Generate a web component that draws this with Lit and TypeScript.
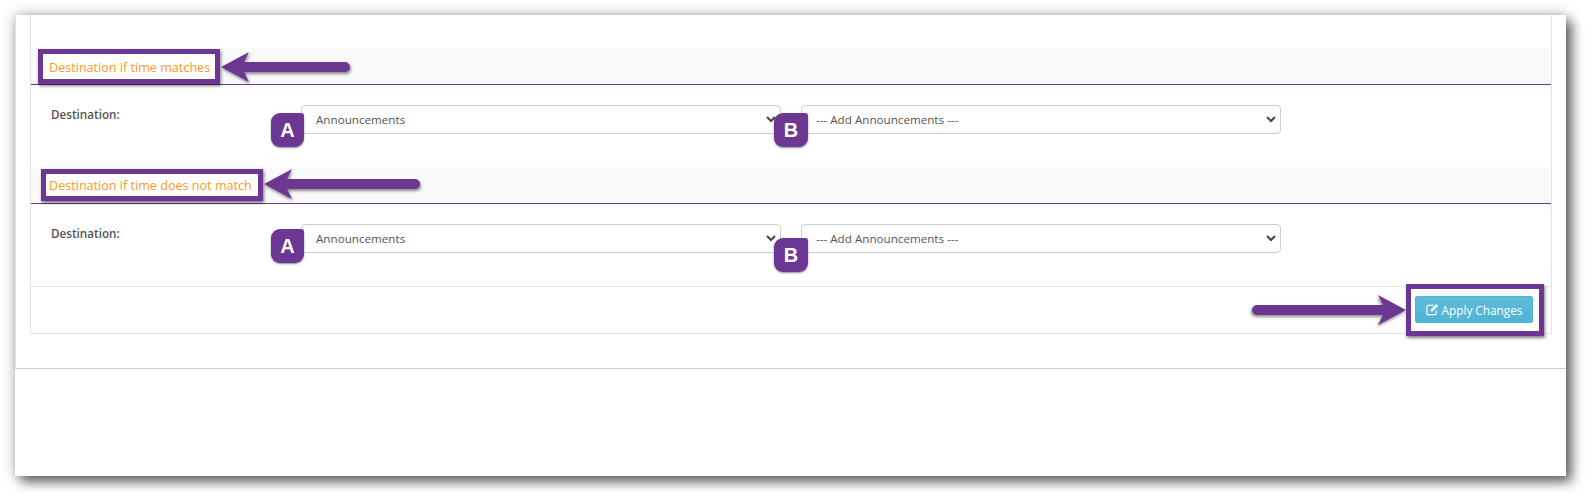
import { LitElement, html, css, svg } from "lit";
import { customElement } from "lit/decorators.js";

const PURPLE = "#6c3792";

@customElement("app-root")
export class AppRoot extends LitElement {
  static styles = css`
    :host { display: block; position: relative; width: 1592px; height: 501px; background: #fff; overflow: hidden;
      font-family: "Open Sans", sans-serif; font-size: 12px; color: #555; }
    .window { position: absolute; left: 15px; top: 15px; width: 1551px; height: 461px; background: #fff;
      box-shadow: 6px 6px 11px rgba(0,0,0,.55), 0 0 13px rgba(0,0,0,.28); }
    .panel { height: 354px; box-sizing: border-box; padding: 0 14px 0 15px; border-left: 1px solid #e2e2e2; border-bottom: 1px solid #ccc; }
    .card { height: 319px; box-sizing: border-box; border: 1px solid #e3e3e3; border-top: 0; margin-left: -1px; padding-top: 33px; }
    .head { height: 37px; box-sizing: border-box; background: #f9f9f9; border-bottom: 1px solid #6c3792; display: flex; align-items: flex-start; }
    .title { box-sizing: border-box; background: #fff; border: 5px solid #6c3792; color: #f99a25; font-size: 12.6px; line-height: 16px;
      box-shadow: 1px 2px 3px rgba(0,0,0,.5); white-space: nowrap; }
    .t1 { width: 182px; height: 35px; margin: 1px 0 0 7px; padding: 6px 0 0 6px; }
    .t2 { width: 222px; height: 32px; margin: 2px 0 0 10px; padding: 4px 0 0 3px; }
    .row { display: flex; height: 82px; box-sizing: border-box; padding: 20px 0 0 20px; }
    .label { width: 250px; font-weight: 600; font-size: 11.7px; line-height: 19px; color: #555; }
    .selects { display: flex; gap: 20px; }
    .sel { position: relative; width: 480px; height: 29px; }
    select { appearance: none; width: 100%; height: 100%; box-sizing: border-box; border: 1px solid #ccc; border-radius: 4px; background: #fff;
      font: 11.65px "Open Sans", sans-serif; color: #555; padding: 0 14px; outline: 0; }
    .chev { position: absolute; right: 5px; top: 10px; width: 10px; height: 8px; }
    .foot { height: 47px; box-sizing: border-box; border-top: 1px solid #e3e3e3; display: flex; justify-content: flex-end; align-items: center; padding-right: 7px; }
    .hl { flex: none; box-sizing: border-box; width: 138px; height: 52px; border: 5px solid #6c3792; background: #fff; padding: 7px 6px 0 4px; box-shadow: 1px 2px 3px rgba(0,0,0,.5); }
    .btn { width: 118px; height: 27px; box-sizing: border-box; display: flex; align-items: center; justify-content: center; gap: 3px;
      border: 1px solid #46b8da; border-radius: 2px; background: linear-gradient(#5fbbda, #4fb3d4); color: #fff; font: 11.8px "Open Sans", sans-serif; padding: 0; }
    .btn svg { width: 13px; height: 13px; }
    .badge { position: absolute; box-sizing: border-box; background: #6c3792; color: #fff;
      border-radius: 9px 3px 9px 9px; box-shadow: 0 1px 2px rgba(0,0,0,.45); display: flex; align-items: center; justify-content: center;
      font: 700 20px "Liberation Sans", sans-serif; }
    .a { left: 271px; width: 33px; height: 34px; }
    .b { left: 774px; width: 34px; height: 34px; }
    .a1 { top: 113px; } .b1 { top: 113px; }
    .a2 { top: 229px; } .b2 { top: 238px; }
    .arrow { position: absolute; overflow: visible; filter: drop-shadow(1px 2px 1.5px rgba(0,0,0,.45)); }
    .ar1 { left: 221px; top: 52px; width: 129px; height: 30px; }
    .ar2 { left: 264px; top: 169px; width: 156px; height: 30px; }
    .ar3 { left: 1252px; top: 295px; width: 154px; height: 30px; transform: scaleX(-1); }
  `;

  private arrow(cls: string, len: number) {
    const d = `M0 15 L28 0 L23 10 L${len - 5} 10 A5 5 0 0 1 ${len - 5} 20 L23 20 L28 30 Z`;
    return html`<svg class="arrow ${cls}" viewBox="0 0 ${len} 30">${svg`<path d=${d} fill=${PURPLE} />`}</svg>`;
  }

  private sel(text: string) {
    return html`<div class="sel"><select><option>${text}</option></select>
      <svg class="chev" viewBox="0 0 10 8"><path d="M1 2 L5 6 L9 2" fill="none" stroke="#444" stroke-width="2"/></svg></div>`;
  }

  private row() {
    return html`<div class="row"><div class="label">Destination:</div>
      <div class="selects">${this.sel("Announcements")}${this.sel("--- Add Announcements ---")}</div></div>`;
  }

  render() {
    return html`
      <div class="window"><div class="panel"><div class="card">
        <div class="head"><div class="title t1">Destination if time matches</div></div>
        ${this.row()}
        <div class="head"><div class="title t2">Destination if time does not match</div></div>
        ${this.row()}
        <div class="foot"><div class="hl"><button class="btn">
          <svg viewBox="0 0 14 14"><path d="M11 8v3.2A1.3 1.3 0 0 1 9.7 12.500H2.300A1.300 1.300 0 0 1 1 11.200V3.800A1.300 1.300 0 0 1 2.300 2.500H8" fill="none" stroke="#fff" stroke-width="1.200"/><path d="M5 7.200 11 1.200 13 3.200 7 9.200H5Z" fill="#fff"/></svg>
          Apply Changes</button></div></div>
      </div></div></div>
      ${this.arrow("ar1", 129)}${this.arrow("ar2", 156)}${this.arrow("ar3", 154)}
      <div class="badge a a1">A</div><div class="badge b b1">B</div>
      <div class="badge a a2">A</div><div class="badge b b2">B</div>
    `;
  }
}
